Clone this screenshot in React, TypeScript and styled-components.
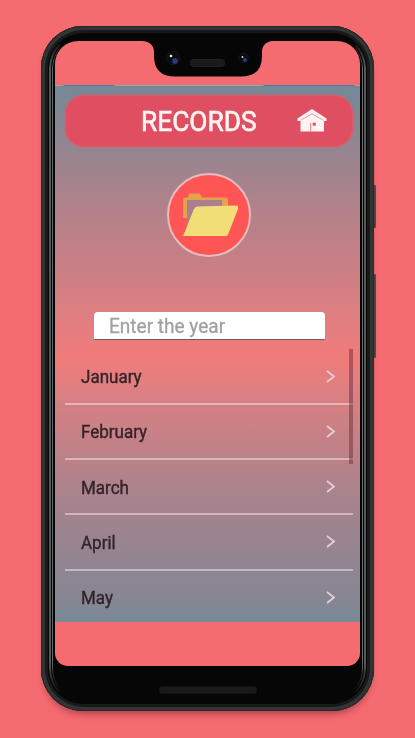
import React from "react";
import styled, { createGlobalStyle } from "styled-components";

const GlobalStyle = createGlobalStyle`
  * { box-sizing: border-box; }
  body { margin: 0; background: #f46b70; font-family: Roboto, "Liberation Sans", sans-serif; }
`;

const Page = styled.main`
  height: 738px;
  overflow: hidden;
  padding: 26px 41px 27px;
  background: #f46b70;
`;

const Phone = styled.div`
  position: relative;
  width: 333px;
  height: 685px;
  padding: 15px 14.5px 45px 14.4px;
  border-radius: 42px;
  background: #060606;
  box-shadow:
    inset 0 0 0 1px #252b2c,
    inset 0 0 0 4px #343434,
    inset 0 0 0 7px #181919,
    0 6px 7px -3px rgba(80, 10, 20, 0.42);
`;

const Rim = styled.div<{ $inset: number; $width: number; $color: string }>`
  position: absolute;
  inset: ${(p) => p.$inset}px;
  border: ${(p) => p.$width}px solid ${(p) => p.$color};
  border-top-color: transparent;
  border-bottom-color: transparent;
  border-radius: ${(p) => 42 - p.$inset}px;
  mask-image: linear-gradient(transparent 4px, #000 30px calc(100% - 40px), transparent calc(100% - 8px));
`;

const SideKey = styled.i<{ $top: number; $height: number }>`
  position: absolute;
  right: -2px;
  top: ${(p) => p.$top}px;
  width: 2px;
  height: ${(p) => p.$height}px;
  border-radius: 0 1px 1px 0;
  background: linear-gradient(90deg, #303638, #5c5457);
`;

const Screen = styled.div`
  position: relative;
  height: 625px;
  padding-top: 43.5px;
  overflow: hidden;
  border-radius: 23px 23px 13px 13px;
  background: #f46b70;
`;

const Notch = styled.svg`
  position: absolute;
  top: -1px;
  left: 86.5px;
`;

const Speaker = styled.i`
  position: absolute;
  left: 118px;
  bottom: 17px;
  width: 98px;
  height: 8px;
  border-radius: 3px;
  background: #191919;
  border: 1px solid #141414;
`;

const AppView = styled.section`
  height: 537.5px;
  padding: 11px 6.6px 0 9.6px;
  overflow: hidden;
  background: linear-gradient(#738997 0, #7e8794 22px, #958591 64px, #b58189 130px,
    #c97f85 180px, #da7f82 220px, #f07b7a 270px, #ee7c7b 278px, #de7f82 304px,
    #d38083 322px, #bd8188 370px, #a4838d 420px, #8e8592 490px, #868693 515px, #788a98 537px);
`;

const StatusLine = styled.div`
  height: 1px;
  margin: -11px -6.6px 9.5px -9.6px;
  background: linear-gradient(90deg, #a3a09f 0 8px, #477fa9 9px 59px, #a3a09f 60px 208px, #477fa9 209px 299px, #a3a09f 300px);
`;

const Header = styled.header`
  display: flex;
  align-items: center;
  height: 52px;
  padding: 0 23.5px 0 75.5px;
  border: 1.5px solid #e9546b;
  border-radius: 19px;
  background: #df4f61;
  box-shadow: 0 0 2px #d95b6c;
`;

const Title = styled.h1`
  margin: 0;
  padding-top: 2px;
  flex: 1;
  color: #fff5f3;
  font-size: 27px;
  font-weight: 400;
  line-height: 50px;
  white-space: nowrap;
  -webkit-text-stroke: 0.6px #fff5f3;
  transform: scaleX(0.975);
  transform-origin: left;
`;

const Badge = styled.div`
  display: grid;
  place-items: center;
  width: 84px;
  height: 84px;
  margin: 26.2px 0 54.8px 102.1px;
  border: 2px solid #e5bdbd;
  border-radius: 50%;
  background: #ff5655;
`;

const YearInput = styled.div`
  width: 231px;
  height: 28px;
  margin-left: 29.1px;
  padding-left: 15px;
  border-radius: 4px 4px 1px 1px;
  border-bottom: 1.5px solid #75585b;
  background: #fff;
  color: #a1a1a1;
  font-size: 20px;
  line-height: 29px;
  -webkit-text-stroke: 0.3px #a1a1a1;
`;

const Placeholder = styled.span`
  display: inline-block;
  transform: scaleX(0.952);
  transform-origin: left;
`;

const ListArea = styled.div`
  position: relative;
  margin-top: 9px;
`;

const Months = styled.ul`
  margin: 0;
  padding: 0.6px 0 0;
  list-style: none;
`;

const Month = styled.li`
  display: flex;
  align-items: center;
  justify-content: space-between;
  height: 55.25px;
  padding: 1px 16px 0 16px;
  border-bottom: 2px solid rgba(236, 218, 223, 0.6);
  color: #34242a;
  font-size: 18px;
  -webkit-text-stroke: 0.4px #34242a;
`;

const MonthName = styled.span`
  transform: scaleX(0.945);
  transform-origin: left;
`;

const ScrollThumb = styled.i`
  position: absolute;
  right: 0;
  top: 0;
  width: 4px;
  height: 115px;
  background: rgba(105, 48, 58, 0.5);
`;

const MONTHS = ["January", "February", "March", "April", "May"];

const HomeIcon = () => (
  <svg width="32" height="26" viewBox="0 0 32 26">
    <path d="M1.5 10.5 16 1 30.5 10.5V13H28V23.5H4.5V13H1.5Z" fill="#fff4f3" />
    <path d="M4.5 12.3 16 5.8 27.5 12.3" fill="none" stroke="#e98a95" strokeWidth="0.9" />
    <rect x="14" y="15" width="1.2" height="8.5" fill="#e98a95" />
    <rect x="16.7" y="14.7" width="3" height="3" fill="#df4f61" />
  </svg>
);

const FolderIcon = () => (
  <svg width="58" height="46" viewBox="0 0 58 46">
    <path d="M3 43V8Q3 5.5 5.5 5.5H8L9 1.5H19.5L22 5.5H45Q48 6 48 8V26H3Z" fill="#e3a24b" />
    <path d="M7 8H42V30L7 38Z" fill="#ab808e" />
    <path d="M3 44 14 17Q15 14.8 17.5 14.5L56.5 13.5Q59 13.5 58 17L48 42.5Q47.3 44 46 44Z" fill="#f1de76" />
  </svg>
);

const Chevron = () => (
  <svg width="12" height="16" viewBox="0 0 12 16">
    <path d="M2 2 9 7.5 2 13" fill="none" stroke="#e3cfd5" strokeWidth="1.8" />
  </svg>
);

const CameraNotch = () => (
  <Notch width="131" height="38" viewBox="0 0 131 38">
    <path d="M0 0H131V1C124 1 120 6 120 12V16Q120 36.5 99 36.5H33Q12 36.5 12 16V12C12 6 8 1 0 1Z" fill="#060606" />
    <circle cx="31" cy="18" r="6.7" fill="#0b0c0e" stroke="#141518" />
    <circle cx="33" cy="21" r="2.9" fill="#293976" />
    <circle cx="29" cy="16" r="1.3" fill="#e8edf0" />
    <rect x="48.5" y="19.5" width="34" height="7" rx="3" fill="#1a1a1a" stroke="#212121" />
    <circle cx="101.5" cy="18" r="4.6" fill="#0a0b10" stroke="#18191d" />
    <circle cx="103" cy="20" r="1.9" fill="#283d82" />
    <circle cx="100.5" cy="17" r="0.9" fill="#e8edf0" />
  </Notch>
);

export default function App() {
  return (
    <>
      <GlobalStyle />
      <Page>
        <Phone>
          <Rim $inset={8} $width={2} $color="#555858" />
          <Rim $inset={11} $width={1} $color="#686969" />
          <SideKey $top={159} $height={43} />
          <SideKey $top={248} $height={84} />
          <Screen>
            <AppView>
              <StatusLine />
              <Header>
                <Title>RECORDS</Title>
                <HomeIcon />
              </Header>
              <Badge><FolderIcon /></Badge>
              <YearInput><Placeholder>Enter the year</Placeholder></YearInput>
              <ListArea>
                <Months>
                  {MONTHS.map((month) => (
                    <Month key={month}>
                      <MonthName>{month}</MonthName>
                      <Chevron />
                    </Month>
                  ))}
                </Months>
                <ScrollThumb />
              </ListArea>
            </AppView>
            <CameraNotch />
          </Screen>
          <Speaker />
        </Phone>
      </Page>
    </>
  );
}
